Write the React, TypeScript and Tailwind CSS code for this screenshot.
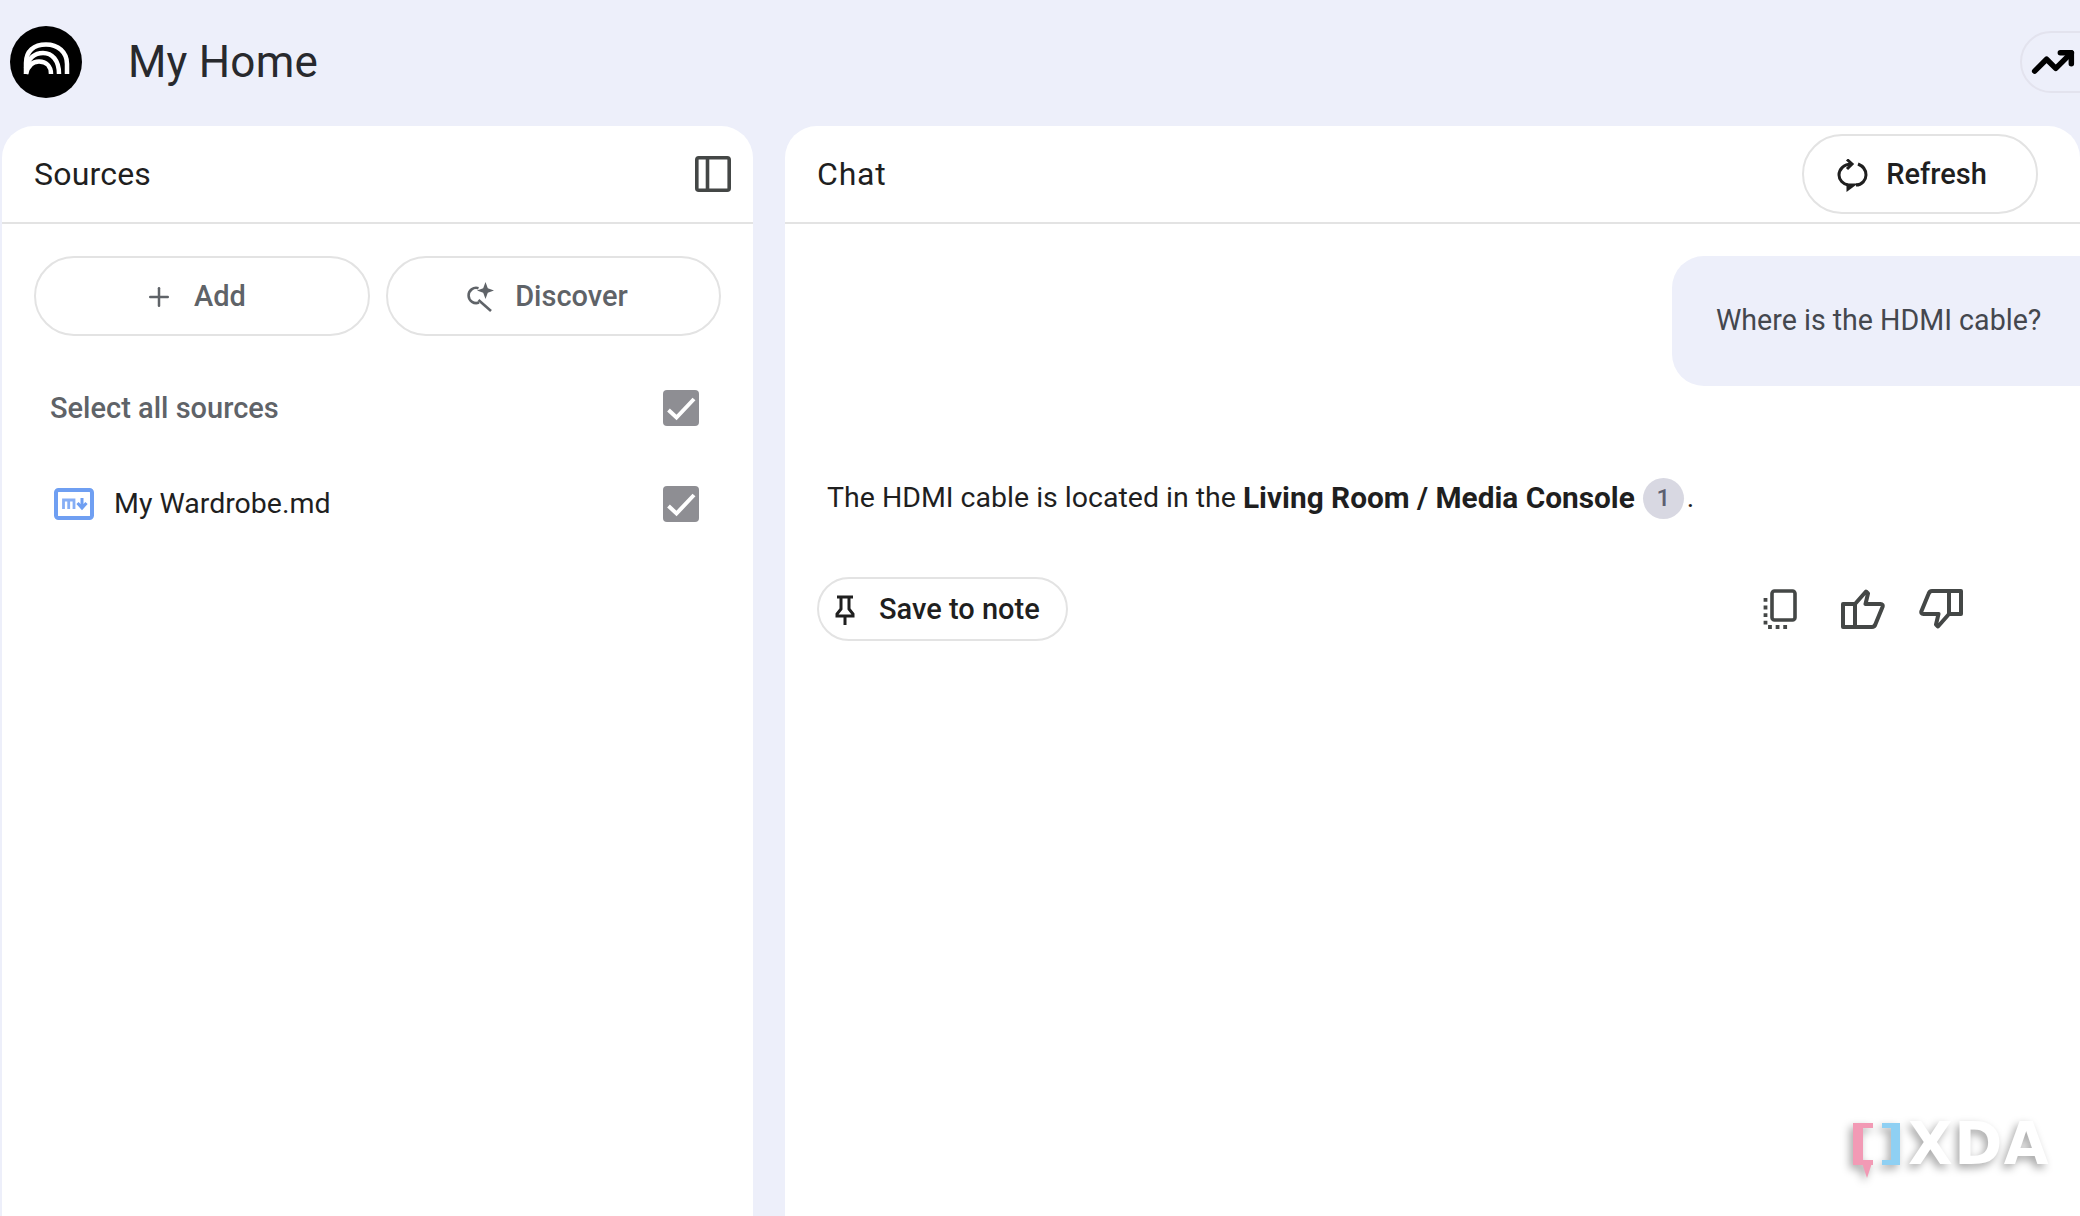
import { Plus, TrendingUp } from "lucide-react";

function Logo() {
  return (
    <div className="flex h-[72px] w-[72px] items-center justify-center rounded-full bg-black">
      <svg viewBox="0 0 72 72" className="h-[72px] w-[72px]" fill="none" stroke="white" strokeWidth="4.5">
        <path d="M16 48V37C16 25 24 18.5 36 18.5C48 18.5 57 26 57 38V48" />
        <path d="M16 42C18 32 25 27 33 27C42 27 49 34 49 48" />
        <path d="M16 48C18 39 23 35.5 29 35.5C36 35.5 41 40 41 48" />
      </svg>
    </div>
  );
}

function PanelIcon() {
  return (
    <svg viewBox="0 0 36 36" className="h-9 w-9" fill="none" stroke="#444746" strokeWidth="3.6">
      <rect x="1.8" y="1.8" width="32.4" height="32.4" rx="2" />
      <path d="M12.5 2V34" />
    </svg>
  );
}

function DiscoverIcon() {
  return (
    <svg viewBox="0 0 30 30" className="h-[30px] w-[30px]" fill="none" stroke="#5f6368" strokeWidth="2.6">
      <path d="M13.5 6.2A7.6 7.6 0 1 0 14 20.5" />
      <path d="M13.5 18L26 29" />
      <path d="M20.5 0L22.8 6.2L29 8.5L22.8 10.8L20.5 17L18.2 10.8L12 8.5L18.2 6.2Z" fill="#5f6368" stroke="none" />
    </svg>
  );
}

function RefreshIcon() {
  return (
    <svg viewBox="0 0 31 33" className="h-[33px] w-[31px]" fill="none" stroke="#1f1f1f" strokeWidth="3">
      <path d="M15 5C6 5 2 11 2 16C2 21 6 25 11 26M19 26C25 26 29 21 29 16C29 11 26 7 21 5" />
      <path d="M9.5 24.5V33L21 24.5Z" fill="#1f1f1f" stroke="none" />
      <path d="M10 0.5L15 5L10 10" />
    </svg>
  );
}

function PinIcon() {
  return (
    <svg viewBox="0 0 20 30" className="h-[30px] w-5" fill="none" stroke="#1f1f1f" strokeWidth="3">
      <path d="M2 2H18M6 2V14L2 19V21H18V19L14 14V2M10 21V30" />
    </svg>
  );
}

function CopyIcon() {
  return (
    <svg viewBox="0 0 36 40" className="h-10 w-9" fill="none" stroke="#444746">
      <rect x="11" y="2" width="23" height="29" rx="2.5" strokeWidth="3.6" />
      <path d="M4.5 9V36Q4.5 38 6.5 38H29" strokeWidth="3.8" strokeDasharray="3.8 3.8" />
    </svg>
  );
}

function ThumbUp() {
  return (
    <svg viewBox="0 0 44 40" className="h-10 w-11" fill="none" stroke="#444746" strokeWidth="4" strokeLinejoin="round">
      <path d="M2 15H14V38H2Z" />
      <path d="M14 15L25 2.5L27 4.5L24.5 15H39.5Q42.5 15 41.5 18L34.5 35Q33.5 38 31 38H14" />
    </svg>
  );
}

function ThumbDown() {
  return (
    <svg viewBox="0 0 44 40" className="h-10 w-11" fill="none" stroke="#444746" strokeWidth="4" strokeLinejoin="round">
      <path d="M42 2H30V25H42Z" />
      <path d="M30 25L19 37.5L17 35.5L19.5 25H4.5Q1.5 25 2.5 22L9.5 5Q10.5 2 13 2H30" />
    </svg>
  );
}

function MdIcon() {
  return (
    <svg viewBox="0 0 40 32" className="h-8 w-10" fill="none">
      <rect x="2" y="2" width="36" height="28" rx="2.5" stroke="#6f9ff2" strokeWidth="4" />
      <path d="M9.5 21V12H20V21M14.7 12V21" stroke="#86aef5" strokeWidth="2.8" />
      <path d="M28 10V19M23.5 15L28 20L32.5 15" stroke="#6f9ff2" strokeWidth="3" />
    </svg>
  );
}

function Check() {
  return (
    <div className="flex h-9 w-9 items-center justify-center rounded-[4px] bg-[#8e8e93]">
      <svg viewBox="0 0 36 36" className="h-9 w-9" fill="none" stroke="white" strokeWidth="4">
        <path d="M5.5 20L13.5 27.5L31 9" />
      </svg>
    </div>
  );
}

function XdaMark() {
  return (
    <div className="absolute bottom-[51px] left-[1853px] flex items-start [filter:drop-shadow(-3px_4px_4px_rgba(0,0,0,0.35))]">
      <div className="relative h-[42px] w-5">
        <div className="h-[42px] w-5 border-y-[5px] border-l-[10px] border-[#f29ab5]" />
        <div className="absolute left-[8px] top-[37px] h-0 w-0 border-x-[6px] border-t-[18px] border-x-transparent border-t-[#f29ab5]" />
      </div>
      <div className="ml-[9px] h-[42px] w-[18px] border-y-[5px] border-r-[9px] border-[#8fd0f3]" />
      <span className="ml-[8px] font-['DejaVu_Sans',sans-serif] text-[58px] font-bold leading-[42px] tracking-[1.5px] text-white">XDA</span>
    </div>
  );
}

export default function App() {
  return (
    <div className="relative h-[1216px] w-[2080px] overflow-hidden bg-[#edeffa] font-['Roboto',sans-serif]">
      <header className="flex h-[126px] items-center justify-between pb-[2px] pl-[10px]">
        <div className="flex items-center gap-[46px]">
          <Logo />
          <span className="text-[44px] leading-none tracking-[0.2px] text-[#28292d]">My Home</span>
        </div>
        <div className="-mr-10 flex h-[62px] w-[100px] items-center rounded-full border-2 border-[#e3e3ee] pl-[9px]">
          <TrendingUp size={44} strokeWidth={3} color="#000" />
        </div>
      </header>

      <div className="flex h-[1090px] gap-[32px] pl-[2px]">
        <aside className="w-[751px] rounded-t-[32px] bg-white">
          <div className="flex h-[98px] items-center justify-between border-b-2 border-[#e3e3e3] pl-[32px] pr-[22px]">
            <span className="text-[32px] tracking-[0.2px] text-[#1f1f1f]">Sources</span>
            <PanelIcon />
          </div>
          <div className="flex gap-[16px] pl-[32px] pt-[32px]">
            <button className="flex h-[80px] w-[336px] items-center justify-center gap-[20px] rounded-full border-2 border-[#e3e3e3] pr-[14px] pt-[2px] text-[29px] font-medium text-[#5f6368]">
              <Plus size={30} strokeWidth={2} />
              Add
            </button>
            <button className="flex h-[80px] w-[335px] items-center justify-center gap-[20px] rounded-full border-2 border-[#e3e3e3] pr-[14px] pt-[2px] text-[29px] font-medium text-[#5f6368]">
              <DiscoverIcon />
              Discover
            </button>
          </div>
          <div className="mt-[54px] flex items-center justify-between pl-[48px] pr-[54px]">
            <span className="text-[29px] font-medium leading-[36px] text-[#5f6368]">Select all sources</span>
            <Check />
          </div>
          <div className="mt-[60px] flex items-center justify-between pl-[52px] pr-[54px]">
            <div className="flex items-center gap-[20px]">
              <MdIcon />
              <span className="text-[28.5px] leading-[36px] text-[#1f1f1f]">My Wardrobe.md</span>
            </div>
            <Check />
          </div>
        </aside>

        <main className="flex-1 rounded-t-[32px] bg-white">
          <div className="flex h-[98px] items-center justify-between border-b-2 border-[#e3e3e3] pl-[32px] pr-[42px]">
            <span className="text-[32px] tracking-[0.8px] text-[#1f1f1f]">Chat</span>
            <button className="flex h-[80px] w-[236px] items-center justify-center gap-[18px] rounded-full border-2 border-[#e3e3e3] pr-[16px] pt-[2px] text-[29px] font-medium text-[#1f1f1f]">
              <RefreshIcon />
              Refresh
            </button>
          </div>
          <div className="flex justify-end pt-[32px]">
            <div className="flex h-[130px] w-[408px] items-center rounded-l-[32px] bg-[#edeffa] pb-[2px] pl-[44px] text-[28.6px] text-[#44474e]">
              Where is the HDMI cable?
            </div>
          </div>
          <p className="mt-[91px] flex h-[42px] items-center pl-[42px] text-[28.5px] text-[#1f1f1f]">
            The HDMI cable is located in the&nbsp;
            <b className="text-[29.8px] font-bold">Living Room / Media Console</b>
            <span className="ml-[8px] mr-[3px] flex h-[41px] w-[41px] items-center justify-center rounded-full bg-[#d8d8e2] text-[24px] font-medium text-[#5c5f70]">1</span>
            .
          </p>
          <div className="mt-[58px] flex items-center justify-between pl-[32px] pr-[117px]">
            <button className="flex h-[64px] w-[251px] items-center gap-[24px] rounded-full border-2 border-[#e3e3e3] pl-[16px] pt-[2px] text-[29px] font-medium text-[#1f1f1f]">
              <PinIcon />
              Save to note
            </button>
            <div className="flex items-center">
              <CopyIcon />
              <div className="ml-[44px]"><ThumbUp /></div>
              <div className="ml-[34px]"><ThumbDown /></div>
            </div>
          </div>
        </main>
      </div>
      <XdaMark />
    </div>
  );
}
